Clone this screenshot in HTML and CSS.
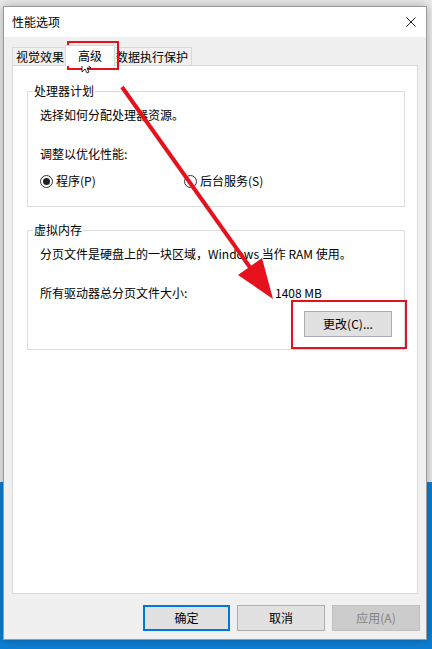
FILE: index.html
```html
<!DOCTYPE html>
<html lang="zh-CN">
<head>
  <meta charset="UTF-8" />
  <meta name="viewport" content="width=device-width, initial-scale=1.0"/>
  <title>性能选项</title>
  <link rel="stylesheet" href="styles.css">
</head>
<body>
  <div class="dialog">
    <header class="titlebar">
      <span class="title">性能选项</span>
      <svg class="close" width="10" height="10" viewBox="0 0 10 10"><path d="M0.5 0.5 L9.5 9.5 M9.5 0.5 L0.5 9.5" stroke="#222" stroke-width="1" fill="none"/></svg>
    </header>

    <div class="content">
      <ul class="tabs">
        <li class="tab">视觉效果</li>
        <li class="tab active">高级</li>
        <li class="tab">数据执行保护</li>
      </ul>

      <div class="panel">
        <fieldset class="group">
          <legend>处理器计划</legend>
          <p>选择如何分配处理器资源。</p>
          <p class="spaced">调整以优化性能:</p>
          <div class="radios">
            <label class="radio first"><span class="circle checked"></span>程序(P)</label>
            <label class="radio"><span class="circle"></span>后台服务(S)</label>
          </div>
        </fieldset>

        <fieldset class="group group-memory">
          <legend>虚拟内存</legend>
          <p>分页文件是硬盘上的一块区域，Windows 当作 RAM 使用。</p>
          <div class="size-row spaced">
            <span class="size-label">所有驱动器总分页文件大小:</span>
            <span>1408 MB</span>
          </div>
          <div class="group-actions">
            <button class="btn">更改(C)...</button>
          </div>
        </fieldset>
      </div>

      <div class="actions">
        <button class="btn default">确定</button>
        <button class="btn">取消</button>
        <button class="btn" disabled>应用(A)</button>
      </div>
    </div>
  </div>

  <!-- red annotation drawn over the screenshot -->
  <svg class="markup" width="432" height="649" viewBox="0 0 432 649">
    <rect x="68" y="42" width="50" height="27" fill="none" stroke="#e5121d" stroke-width="2"/>
    <rect x="292" y="301" width="114" height="47" fill="none" stroke="#e5121d" stroke-width="2"/>
    <line x1="122" y1="87" x2="254" y2="273" stroke="#e5121d" stroke-width="4"/>
    <polygon points="273,299 238,275 262,258" fill="#e5121d"/>
    <path d="M82 60 L82 72 L85 69 L87 73 L89 72 L87 68 L91 68 Z" fill="#fff" stroke="#000" stroke-width="0.8"/>
  </svg>
</body>
</html>
```

FILE: styles.css
```css
* { margin: 0; padding: 0; box-sizing: border-box; }
body {
  position: relative;
  width: 432px;
  height: 649px;
  overflow: hidden;
  font: 12px/16px "Noto Sans CJK SC", "Microsoft YaHei", sans-serif;
  color: #000;
  background: linear-gradient(to bottom, #ececec 0, #ececec 482px, #0c7fd3 482px);
}

.dialog {
  width: 424px;
  height: 634px;
  margin: 6px 0 0 3px;
  border: 1px solid #9b9b9b;
  background-color: #f0f0f0;
  box-shadow: 0 0 10px rgba(0, 0, 0, 0.3);
  display: flex;
  flex-direction: column;
}

.titlebar {
  height: 30px;
  flex: none;
  background-color: #fff;
  display: flex;
  align-items: center;
  justify-content: space-between;
  padding: 0 10px 0 8px;
}
.close { display: block; }

.content {
  flex: 1;
  display: flex;
  flex-direction: column;
  padding: 0 8px;
}

.tabs {
  list-style: none;
  display: flex;
  align-items: flex-end;
  height: 28px;
  padding-top: 8px;
}
.tab {
  height: 18px;
  line-height: 17px;
  padding: 0 3px;
  border: 1px solid #d9d9d9;
  border-bottom: none;
  background-color: #f0f0f0;
  margin-left: -1px;
}
.tab:first-child { margin-left: 0; }
.tab.active {
  position: relative;
  z-index: 1;
  height: 21px;
  line-height: 19px;
  padding: 0 12px;
  margin: 0 -2px -1px -3px;
  background-color: #fff;
}

.panel {
  height: 529px;
  flex: none;
  background-color: #fff;
  border: 1px solid #d9d9d9;
  padding-top: 17px;
}

.group {
  margin: 0 12px 0 14px;
  padding: 8px 12px 17px;
  border: 1px solid #dcdcdc;
  min-width: 0;
}
.group legend {
  padding: 0 1px;
  margin-left: -7px;
  line-height: 16px;
}
.group-memory {
  margin-top: 15px;
  padding-bottom: 12px;
}
.spaced { margin-top: 23px; }

.radios {
  display: flex;
  margin-top: 11px;
}
.radio {
  display: flex;
  align-items: center;
}
.radio.first { width: 144px; }
.circle {
  width: 13px;
  height: 13px;
  border: 1px solid #333;
  border-radius: 50%;
  background-color: #fff;
  margin-right: 3px;
  display: flex;
  align-items: center;
  justify-content: center;
}
.circle.checked::after {
  content: "";
  width: 7px;
  height: 7px;
  border-radius: 50%;
  background-color: #222;
}

.size-row { display: flex; }
.size-label { width: 235px; }

.group-actions {
  display: flex;
  justify-content: flex-end;
  margin-top: 10px;
}

.btn {
  font: inherit;
  color: #000;
  width: 88px;
  height: 26px;
  background-color: #e1e1e1;
  border: 1px solid #adadad;
}
.btn.default {
  border: 2px solid #0078d7;
  width: 87px;
}
.btn:disabled {
  background-color: #cccccc;
  border-color: #bfbfbf;
  color: #838383;
}

.actions {
  display: flex;
  justify-content: flex-end;
  gap: 7px;
  margin: 11px -2px 0 0;
}

.markup {
  position: absolute;
  top: 0;
  left: 0;
  pointer-events: none;
}
```
